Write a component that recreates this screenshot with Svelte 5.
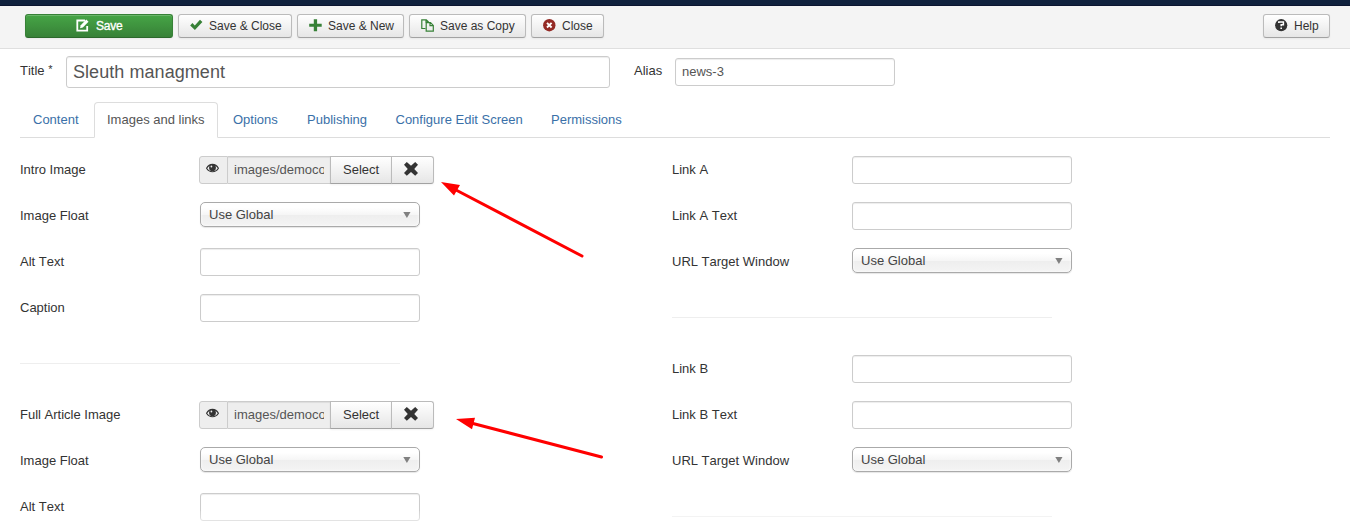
<script>
  const actions = [
    { id: 'check', label: 'Save & Close', width: 114 },
    { id: 'plus', label: 'Save & New', width: 107 },
    { id: 'copy', label: 'Save as Copy', width: 117 },
    { id: 'cancel', label: 'Close', width: 73 }
  ];
  const tabs = [
    { label: 'Content', width: 72 },
    { label: 'Images and links', width: 124, active: true },
    { label: 'Options', width: 72 },
    { label: 'Publishing', width: 86.5 },
    { label: 'Configure Edit Screen', width: 153.5 },
    { label: 'Permissions', width: 98 }
  ];
  const left = [
    [
      { label: 'Intro Image', type: 'media' },
      { label: 'Image Float', type: 'select' },
      { label: 'Alt Text', type: 'text' },
      { label: 'Caption', type: 'text' }
    ],
    [
      { label: 'Full Article Image', type: 'media' },
      { label: 'Image Float', type: 'select' },
      { label: 'Alt Text', type: 'text' }
    ]
  ];
  const right = [
    [
      { label: 'Link A', type: 'text' },
      { label: 'Link A Text', type: 'text' },
      { label: 'URL Target Window', type: 'select' }
    ],
    [
      { label: 'Link B', type: 'text' },
      { label: 'Link B Text', type: 'text' },
      { label: 'URL Target Window', type: 'select' }
    ],
    []
  ];
</script>

{#snippet icon(id)}
  <svg class="icon" width="13" height="13" viewBox="0 0 13 13">
    {#if id === 'edit'}
      <path d="M9 1.5H1.3v10.2h9.9V7" fill="none" stroke="#fff" stroke-width="1.8" />
      <path d="M4 9.3l.7-3L10.3.6l2.2 2.1-5.7 5.8z" fill="#fff" />
    {:else if id === 'check'}
      <path d="M.2 6.4l2.2-2.3 2.4 2.4L10 .8l2.4 2.1-7.5 8z" fill="#378137" />
    {:else if id === 'plus'}
      <path d="M4.8.2h3.3v4.5h4.6v3H8.1v4.6H4.8V7.7H.2v-3h4.6z" fill="#378137" />
    {:else if id === 'copy'}
      <path d="M4.5 9.5H.8V.8h4.5l2 2V4M5 .8V3h2.3" fill="none" stroke="#378137" stroke-width="1.2" />
      <path d="M5.2 3.6h4.3l2.8 2.8v5.8H5.2zM9 3.6v3.1h3.3" fill="none" stroke="#378137" stroke-width="1.2" />
    {:else if id === 'cancel'}
      <circle cx="6.3" cy="6.2" r="6.2" fill="#942a25" />
      <path d="M4 3.9l4.6 4.6M8.6 3.9L4 8.5" stroke="#fff" stroke-width="1.9" />
    {:else if id === 'help'}
      <circle cx="6.2" cy="6.2" r="6.1" fill="#333" />
      <path d="M3.8 4.1V3h4.6v2.7H6.2v1.5" fill="none" stroke="#fff" stroke-width="1.5" />
      <path d="M5.4 8.4H7V10H5.4z" fill="#fff" />
    {:else if id === 'eye'}
      <path d="M.6 5.2C3.5.1 9.5.1 12.4 5.2 9.5 9.9 3.5 9.9.6 5.2z" fill="#eee" stroke="#333" stroke-width="1.2" />
      <circle cx="6.5" cy="4.7" r="3.4" fill="#333" />
      <circle cx="5.4" cy="3.5" r=".9" fill="#eee" />
    {:else if id === 'remove'}
      <path d="M0 2.6L2.6 0l3.9 3.5L10.4 0 13 2.6 9.5 6.4l3.5 3.8-2.6 2.6-3.9-3.5-3.9 3.5L0 10.2l3.5-3.8z" fill="#333" />
    {/if}
  </svg>
{/snippet}

{#snippet column(groups)}
  {#each groups as group, i}
    {#if i > 0}<hr />{/if}
    {#each group as field}
      <div class="row">
        <span class="label">{field.label}</span>
        {#if field.type === 'media'}
          <div class="media">
            <span class="addon">{@render icon('eye')}</span>
            <span class="path"><span>images/democo</span></span>
            <button class="btn choose">Select</button>
            <button class="btn remove">{@render icon('remove')}</button>
          </div>
        {:else if field.type === 'select'}
          <div class="select">
            <span>Use Global</span>
            <svg width="8" height="6" viewBox="0 0 8 6"><path d="M.3 0h7.2L3.9 6z" fill="#808080" /></svg>
          </div>
        {:else}
          <div class="input"></div>
        {/if}
      </div>
    {/each}
  {/each}
{/snippet}

<div class="page">
  <div class="navbar"></div>
  <header>
    <button class="btn save">{@render icon('edit')}<span>Save</span></button>
    {#each actions as action}
      <button class="btn" style="width: {action.width}px">{@render icon(action.id)}<span>{action.label}</span></button>
    {/each}
    <button class="btn help">{@render icon('help')}<span>Help</span></button>
  </header>
  <div class="title-row">
    <span class="title-label">Title <small>*</small></span>
    <div class="input title">Sleuth managment</div>
    <span class="alias-label">Alias</span>
    <div class="input">news-3</div>
  </div>
  <nav>
    {#each tabs as tab}
      <span class="tab" class:active={tab.active} style="width: {tab.width}px">{tab.label}</span>
    {/each}
  </nav>
  <main>
    <section>{@render column(left)}</section>
    <section>{@render column(right)}</section>
  </main>
  <svg class="arrows" width="1350" height="530" viewBox="0 0 1350 530">
    <g stroke="#f00" stroke-width="3" stroke-linecap="round">
      <path d="M456 190L582 256M473 423.5L601.5 457" />
    </g>
    <path d="M441 182l19 3-6 10.5zM456 419l19-1.3-3 11.6z" fill="#f00" />
  </svg>
  <div class="fade"></div>
</div>

<style>
  :global(body) { margin: 0; background: #fff; }
  .page {
    position: relative;
    width: 1350px;
    height: 530px;
    overflow: hidden;
    font: 13px/18px "Liberation Sans", Arial, sans-serif;
    font-kerning: none;
    color: #333;
  }
  .page * { box-sizing: border-box; }
  svg { display: block; flex: none; }
  .navbar { height: 6px; background: #10223e; border-bottom: 1px solid #0b1530; }
  header {
    display: flex;
    gap: 5px;
    height: 43px;
    padding: 8px 20px 0 25px;
    background: #f4f4f4;
    border-bottom: 1px solid #dfdfdf;
  }
  .btn {
    display: flex;
    align-items: center;
    gap: 6px;
    height: 24px;
    padding: 0 0 0 11px;
    border: 1px solid #bbb;
    border-bottom-color: #a2a2a2;
    border-radius: 3px;
    background: linear-gradient(#fff, #e6e6e6);
    box-shadow: inset 0 1px 0 rgba(255, 255, 255, .2), 0 1px 2px rgba(0, 0, 0, .05);
    color: #333;
    font: inherit;
    font-kerning: none;
    white-space: nowrap;
  }
  header .btn { font-size: 12px; }
  header .icon { position: relative; top: -1px; }
  header .save {
    width: 148px;
    padding-left: 50px;
    gap: 7px;
    color: #fff;
    letter-spacing: -.2px;
    -webkit-text-stroke: .35px #fff;
    border-color: #378137 #378137 #2b682b;
    background: linear-gradient(#46a546, #378137);
  }
  .help { width: 67px; margin-left: auto; }
  .title-row { display: flex; padding: 7px 0 0 20px; height: 53px; }
  .title-label { width: 46px; padding-top: 6px; }
  .title-label small { position: relative; top: -2px; font-size: 11px; line-height: 1; }
  .alias-label { width: 65px; padding: 6px 0 0 24px; }
  .title-row .input:last-child { margin-top: 2px; }
  .input {
    width: 220px;
    height: 28px;
    padding: 4px 6px;
    border: 1px solid #ccc;
    border-radius: 3px;
    box-shadow: inset 0 1px 1px rgba(0, 0, 0, .075);
    color: #555;
  }
  .input.title { width: 544px; height: 32px; padding: 6px; font-size: 18px; letter-spacing: .06px; }
  nav {
    display: flex;
    gap: 2px;
    height: 36px;
    margin: 0 20px;
    border-bottom: 1px solid #ddd;
  }
  .tab {
    height: 36px;
    padding: 8px 0 0 12px;
    border: 1px solid transparent;
    border-radius: 4px 4px 0 0;
    color: #3a70a8;
    white-space: nowrap;
  }
  .active { color: #555; background: #fff; border-color: #ddd #ddd #fff; }
  main { display: flex; padding: 18px 0 0 20px; }
  section { width: 652px; }
  .row { display: flex; height: 28px; margin-bottom: 18px; }
  .label { width: 180px; padding-top: 5px; }
  hr { width: 380px; height: 1px; margin: 41px 0 37px; border: 0; background: #eee; }
  .media { display: flex; width: 235px; height: 28px; margin-left: -1px; }
  .addon {
    width: 29px;
    padding: 6px 0 0 6px;
    background: #eee;
    border: 1px solid #ccc;
    border-radius: 3px 0 0 3px;
  }
  .path {
    width: 102px;
    padding: 4px 6px;
    background: #eee;
    border: 1px solid #ccc;
    border-width: 1px 0;
    box-shadow: inset 0 1px 1px rgba(0, 0, 0, .075);
    color: #555;
  }
  .path span { display: block; overflow: hidden; white-space: nowrap; }
  .choose { width: 62px; height: 28px; padding-left: 12px; border-radius: 0; }
  .remove { width: 43px; height: 28px; margin-left: -1px; padding: 0 0 3px 12px; border-radius: 0 3px 3px 0; }
  .remove .icon { width: 14px; height: 14px; }
  .select {
    display: flex;
    justify-content: space-between;
    align-items: center;
    width: 220px;
    height: 25px;
    padding: 0 8px;
    border: 1px solid #aaa;
    border-radius: 5px;
    background: linear-gradient(#fff 20%, #f6f6f6 50%, #eee 52%, #f4f4f4);
    box-shadow: inset 0 0 3px #fff, 0 1px 1px rgba(0, 0, 0, .1);
    color: #444;
  }
  .arrows { position: absolute; inset: 0; pointer-events: none; }
  .fade {
    position: absolute;
    inset: 511px 0 0;
    background: linear-gradient(rgba(255, 255, 255, .1), rgba(255, 255, 255, .8));
    pointer-events: none;
  }
</style>
